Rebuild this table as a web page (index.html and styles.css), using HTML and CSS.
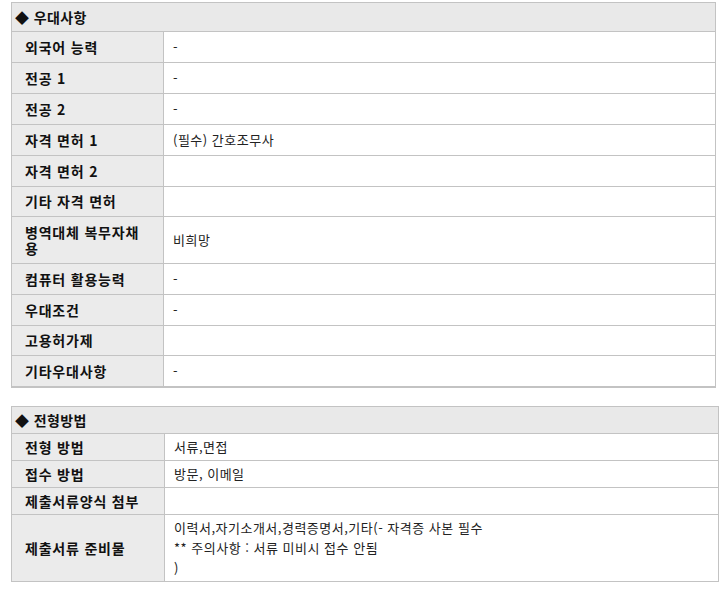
FILE: index.html
```html
<!DOCTYPE html>
<html lang="ko">
<head>
<meta charset="utf-8">
<link rel="stylesheet" href="styles.css">
</head>
<body>
<table class="info info-a">
  <colgroup><col class="c-label"><col></colgroup>
  <tr><th colspan="2" class="head">◆ 우대사항</th></tr>
  <tr><th>외국어 능력</th><td>-</td></tr>
  <tr><th>전공 1</th><td>-</td></tr>
  <tr><th>전공 2</th><td>-</td></tr>
  <tr><th>자격 면허 1</th><td>(필수) 간호조무사</td></tr>
  <tr><th>자격 면허 2</th><td></td></tr>
  <tr class="short"><th>기타 자격 면허</th><td></td></tr>
  <tr><th>병역대체 복무자채용</th><td>비희망</td></tr>
  <tr><th>컴퓨터 활용능력</th><td>-</td></tr>
  <tr><th>우대조건</th><td>-</td></tr>
  <tr class="short"><th>고용허가제</th><td></td></tr>
  <tr><th>기타우대사항</th><td>-</td></tr>
</table>

<table class="info info-b">
  <colgroup><col class="c-label"><col></colgroup>
  <tr><th colspan="2" class="head">◆ 전형방법</th></tr>
  <tr><th>전형 방법</th><td>서류,면접</td></tr>
  <tr><th>접수 방법</th><td>방문, 이메일</td></tr>
  <tr><th>제출서류양식 첨부</th><td></td></tr>
  <tr><th>제출서류 준비물</th><td>이력서,자기소개서,경력증명서,기타(- 자격증 사본 필수<br>** 주의사항 : 서류 미비시 접수 안됨<br>)</td></tr>
</table>
</body>
</html>
```

FILE: styles.css
```css
html, body {
  margin: 0;
  padding: 0;
  background: #fff;
}
body {
  padding: 2px 0 0 11px;
  font-family: "Noto Sans CJK KR", "Noto Sans", sans-serif;
  color: #222;
}
.info {
  border-collapse: collapse;
  table-layout: fixed;
  font-size: 13px;
}
.info th, .info td {
  border: 1px solid #c3c3c3;
  text-align: left;
  vertical-align: middle;
}
.info th {
  background: #ebebeb;
  font-weight: bold;
  font-size: 14px;
  color: #111;
  letter-spacing: 0.8px;
  padding-left: 13px;
  padding-right: 14px;
}
.info td {
  background: #fff;
  padding-left: 9px;
  padding-right: 8px;
  letter-spacing: 0.5px;
}
.info th.head {
  background: #e9e9e9;
  padding-left: 3px;
  letter-spacing: 0.4px;
}
.info-a {
  width: 705px;
  border-bottom: 2px solid #c3c3c3;
}
.info-a col.c-label { width: 152px; }
.info-a th, .info-a td {
  line-height: 16px;
  padding-top: 7px;
  padding-bottom: 7px;
}
.info-a th.head {
  padding-top: 6px;
  padding-bottom: 6px;
}
.info-a tr.short th, .info-a tr.short td {
  padding-top: 6px;
  padding-bottom: 7px;
}
.info-a tr:last-child th, .info-a tr:last-child td {
  border-bottom: 2px solid #c3c3c3;
}
.info-b {
  width: 708px;
  margin-top: 18px;
}
.info-b col.c-label { width: 153px; }
.info-b th, .info-b td {
  line-height: 20px;
  padding-top: 3px;
  padding-bottom: 3px;
}
.info-b th.head {
  padding-top: 3px;
  padding-bottom: 3px;
}
```
